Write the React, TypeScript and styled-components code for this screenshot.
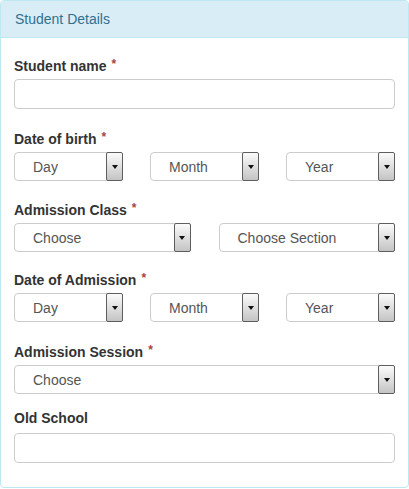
import styled, { createGlobalStyle } from "styled-components";

const GlobalStyle = createGlobalStyle`
  body {
    margin: 0;
    background: #fff;
    font-family: "Liberation Sans", Arial, sans-serif;
    font-size: 14px;
    color: #333;
  }
  * {
    box-sizing: border-box;
  }
`;

const Panel = styled.div`
  width: 409px;
  height: 488px;
  border: 1px solid #bce8f1;
  border-radius: 4px;
  background: #fff;
  overflow: hidden;
`;

const PanelHeading = styled.div`
  height: 37px;
  padding: 0 14px;
  display: flex;
  align-items: center;
  background: #d9edf7;
  border-bottom: 1px solid #bce8f1;
  color: #31708f;
  font-size: 14px;
`;

const PanelBody = styled.div`
  padding: 16px 13px 0 13px;
`;

const FormGroup = styled.div<{ $gap: number }>`
  margin-bottom: ${(p) => p.$gap}px;
`;

const Label = styled.label`
  display: block;
  height: 20px;
  line-height: 20px;
  margin-bottom: 5px;
  font-weight: bold;
  font-size: 14px;
  color: #333;
`;

const Star = styled.span`
  color: #a94442;
  margin-left: 5px;
  font-size: 12px;
  vertical-align: 3px;
`;

const TextInput = styled.input`
  display: block;
  width: 100%;
  height: 30px;
  border: 1px solid #ccc;
  border-radius: 4px;
  padding: 0 12px;
  font: inherit;
  outline: none;
`;

const Row = styled.div<{ $cols: number }>`
  display: grid;
  grid-template-columns: repeat(${(p) => p.$cols}, 1fr);
  column-gap: ${(p) => (p.$cols === 3 ? 27 : 28)}px;
`;

const SelectBox = styled.div`
  display: flex;
  align-items: center;
  height: 29px;
  border: 1px solid #ccc;
  border-radius: 4px;
  background: #fff;
`;

const SelectText = styled.span`
  flex: 1;
  padding-left: 18px;
  color: #555;
  font-size: 14px;
`;

const ArrowBtn = styled.span`
  align-self: stretch;
  width: 17px;
  margin: -1px -1px -1px 0;
  border: 1px solid #5e5e5e;
  border-radius: 2px;
  background: linear-gradient(#fbfbfb, #c4c4c4);
  display: flex;
  align-items: center;
  justify-content: center;
  &::after {
    content: "";
    width: 0;
    height: 0;
    border-left: 3.5px solid transparent;
    border-right: 3.5px solid transparent;
    border-top: 4px solid #111;
  }
`;

function Select({ text }: { text: string }) {
  return (
    <SelectBox>
      <SelectText>{text}</SelectText>
      <ArrowBtn />
    </SelectBox>
  );
}

function Field({
  label,
  required,
  gap = 17,
  children,
}: {
  label: string;
  required?: boolean;
  gap?: number;
  children: React.ReactNode;
}) {
  return (
    <FormGroup $gap={gap}>
      <Label>
        {label}
        {required && <Star>*</Star>}
      </Label>
      {children}
    </FormGroup>
  );
}

function App() {
  return (
    <>
      <GlobalStyle />
      <Panel>
        <PanelHeading>Student Details</PanelHeading>
        <PanelBody>
          <Field label="Student name" required gap={18}>
            <TextInput type="text" />
          </Field>
          <Field label="Date of birth" required>
            <Row $cols={3}>
              <Select text="Day" />
              <Select text="Month" />
              <Select text="Year" />
            </Row>
          </Field>
          <Field label="Admission Class" required gap={16}>
            <Row $cols={2}>
              <Select text="Choose" />
              <Select text="Choose Section" />
            </Row>
          </Field>
          <Field label="Date of Admission" required gap={18}>
            <Row $cols={3}>
              <Select text="Day" />
              <Select text="Month" />
              <Select text="Year" />
            </Row>
          </Field>
          <Field label="Admission Session" required gap={14}>
            <Select text="Choose" />
          </Field>
          <Field label="Old School" gap={0}>
            <TextInput type="text" />
          </Field>
        </PanelBody>
      </Panel>
    </>
  );
}

export default App;
